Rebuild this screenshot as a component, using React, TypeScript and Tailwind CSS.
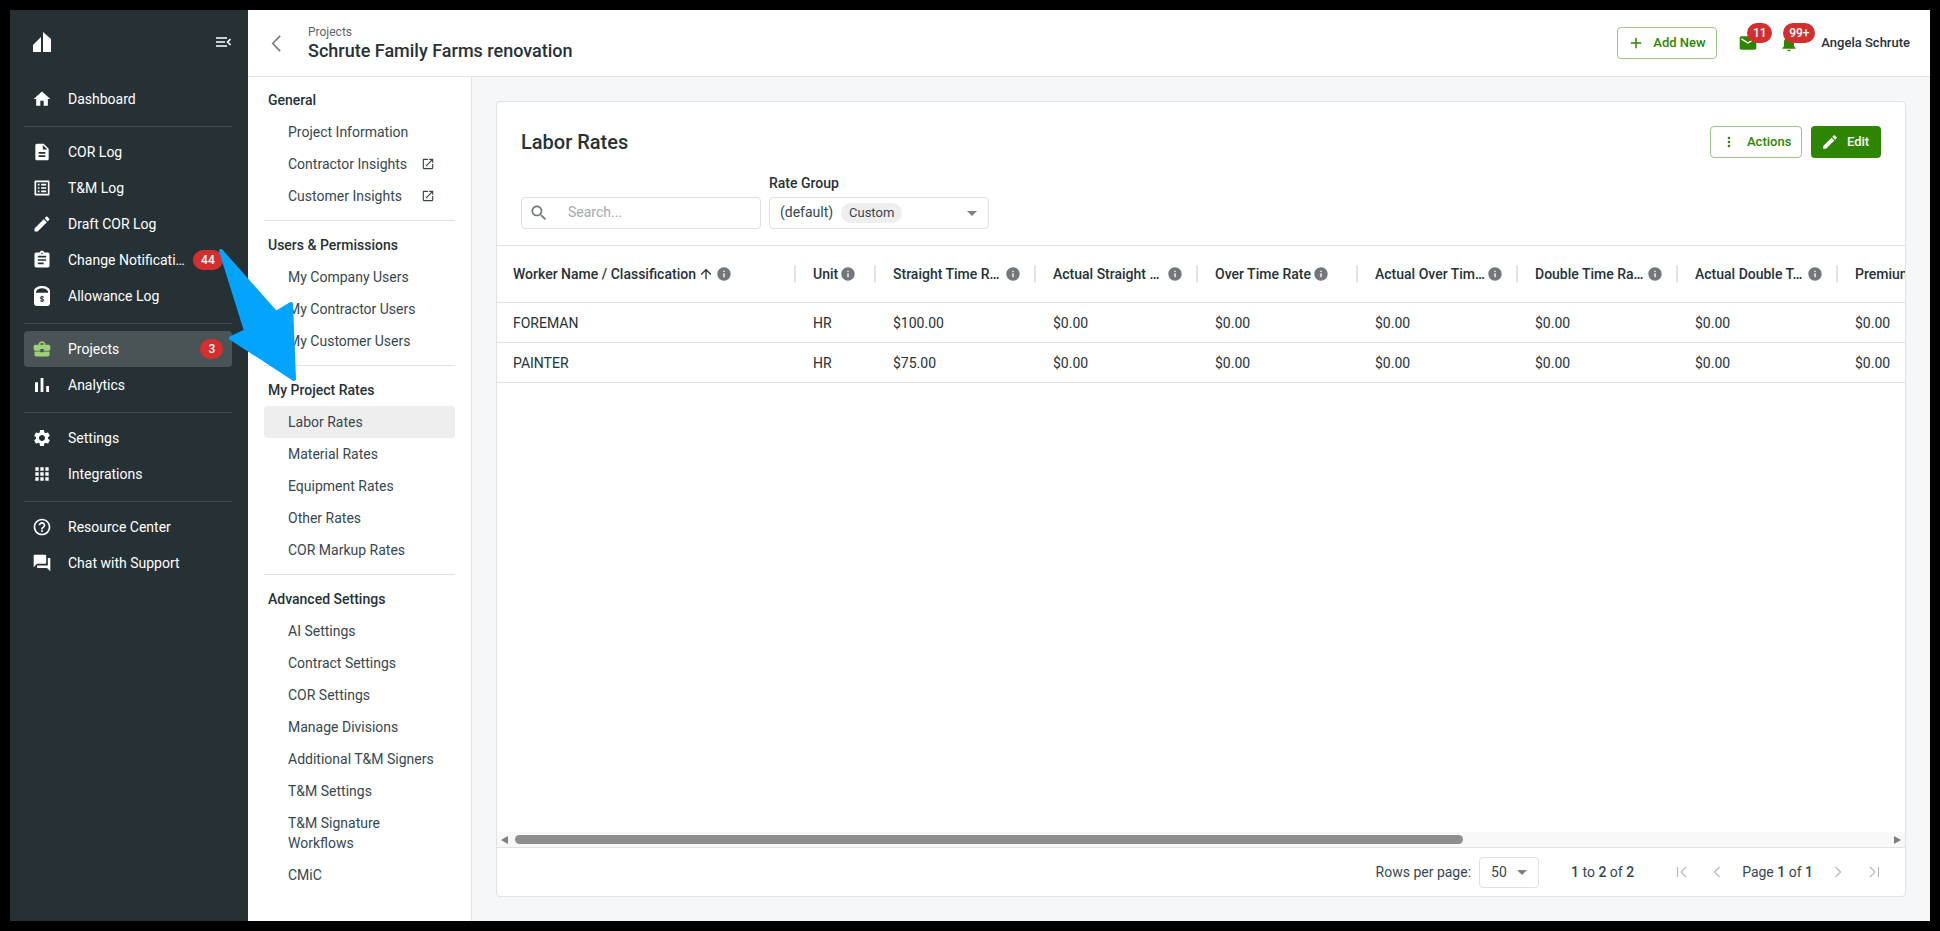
import React from "react";

const P = {
  home: "M10 20v-6h4v6h5v-8h3L12 3 2 12h3v8z",
  doc: "M14 2H6c-1.1 0-1.99.9-1.99 2L4 20c0 1.1.89 2 1.99 2H18c1.1 0 2-.9 2-2V8l-6-6zm2 16H8v-2h8v2zm0-4H8v-2h8v2zm-3-5V3.5L18.5 9H13z",
  list: "M19 5v14H5V5h14m1.1-2H3.9c-.5 0-.9.4-.9.9v16.2c0 .4.4.9.9.9h16.2c.4 0 .9-.5.9-.9V3.9c0-.5-.5-.9-.9-.9zM11 7h6v2h-6V7zm0 4h6v2h-6v-2zm0 4h6v2h-6zM7 7h2v2H7zm0 4h2v2H7zm0 4h2v2H7z",
  edit: "M3 17.25V21h3.75L17.81 9.94l-3.75-3.75L3 17.25zM20.71 7.04c.39-.39.39-1.02 0-1.41l-2.34-2.34c-.39-.39-1.02-.39-1.41 0l-1.83 1.83 3.75 3.75 1.83-1.83z",
  clip: "M19 3h-4.18C14.4 1.84 13.3 1 12 1c-1.3 0-2.4.84-2.82 2H5c-1.1 0-2 .9-2 2v14c0 1.1.9 2 2 2h14c1.1 0 2-.9 2-2V5c0-1.1-.9-2-2-2zm-7 0c.55 0 1 .45 1 1s-.45 1-1 1-1-.45-1-1 .45-1 1-1zm2 14H7v-2h7v2zm3-4H7v-2h10v2zm0-4H7V7h10v2z",
  work: "M10 16v-1H3.01L3 19c0 1.11.89 2 2 2h14c1.11 0 2-.89 2-2v-4h-7v1h-4zm10-9h-4.01V5l-2-2h-4l-2 2v2H4c-1.1 0-2 .9-2 2v3c0 1.11.89 2 2 2h6v-2h4v2h6c1.1 0 2-.9 2-2V9c0-1.1-.9-2-2-2zm-6 0h-4V5h4v2z",
  bars: "M5 9.2h3V19H5zM10.6 5h2.8v14h-2.8zm5.6 8H19v6h-2.8z",
  gear: "M19.14 12.94c.04-.3.06-.61.06-.94 0-.32-.02-.64-.07-.94l2.03-1.58c.18-.14.23-.41.12-.61l-1.92-3.32c-.12-.22-.37-.29-.59-.22l-2.39.96c-.5-.38-1.03-.7-1.62-.94l-.36-2.54c-.04-.24-.24-.41-.48-.41h-3.84c-.24 0-.43.17-.47.41l-.36 2.54c-.59.24-1.13.57-1.62.94l-2.39-.96c-.22-.08-.47 0-.59.22L2.74 8.87c-.12.21-.08.47.12.61l2.03 1.58c-.05.3-.09.63-.09.94s.02.64.07.94l-2.03 1.58c-.18.14-.23.41-.12.61l1.92 3.32c.12.22.37.29.59.22l2.39-.96c.5.38 1.03.7 1.62.94l.36 2.54c.05.24.24.41.48.41h3.84c.24 0 .44-.17.47-.41l.36-2.54c.59-.24 1.13-.56 1.62-.94l2.39.96c.22.08.47 0 .59-.22l1.92-3.32c.12-.22.07-.47-.12-.61l-2.01-1.58zM12 15.6c-1.98 0-3.6-1.62-3.6-3.6s1.62-3.6 3.6-3.6 3.6 1.62 3.6 3.6-1.62 3.6-3.6 3.6z",
  apps: "M4 8h4V4H4v4zm6 12h4v-4h-4v4zm-6 0h4v-4H4v4zm0-6h4v-4H4v4zm6 0h4v-4h-4v4zm6-10v4h4V4h-4zm-6 4h4V4h-4v4zm6 6h4v-4h-4v4zm0 6h4v-4h-4v4z",
  help: "M11 18h2v-2h-2v2zm1-16C6.48 2 2 6.48 2 12s4.48 10 10 10 10-4.48 10-10S17.52 2 12 2zm0 18c-4.41 0-8-3.59-8-8s3.59-8 8-8 8 3.59 8 8-3.59 8-8 8zm0-14c-2.21 0-4 1.79-4 4h2c0-1.1.9-2 2-2s2 .9 2 2c0 2-3 1.75-3 5h2c0-2.25 3-2.5 3-5 0-2.21-1.79-4-4-4z",
  forum: "M21 6h-2v9H6v2c0 .55.45 1 1 1h11l4 4V7c0-.55-.45-1-1-1zm-4 6V3c0-.55-.45-1-1-1H3c-.55 0-1 .45-1 1v14l4-4h10c.55 0 1-.45 1-1z",
  mail: "M20 4H4c-1.1 0-1.99.9-1.99 2L2 18c0 1.1.9 2 2 2h16c1.1 0 2-.9 2-2V6c0-1.1-.9-2-2-2zm0 4l-8 5-8-5V6l8 5 8-5v2z",
  bell: "M12 22c1.1 0 2-.9 2-2h-4c0 1.1.89 2 2 2zm6-6v-5c0-3.07-1.64-5.64-4.5-6.32V4c0-.83-.67-1.5-1.5-1.5s-1.5.67-1.5 1.5v.68C7.63 5.36 6 7.92 6 11v5l-2 2v1h16v-1l-2-2z",
  open: "M19 19H5V5h7V3H5c-1.11 0-2 .9-2 2v14c0 1.1.89 2 2 2h14c1.1 0 2-.9 2-2v-7h-2v7zM14 3v2h3.59l-9.83 9.83 1.41 1.41L19 6.41V10h2V3h-7z",
  search: "M15.5 14h-.79l-.28-.27C15.41 12.59 16 11.11 16 9.5 16 5.91 13.09 3 9.5 3S3 5.91 3 9.5 5.91 16 9.5 16c1.61 0 3.09-.59 4.23-1.57l.27.28v.79l5 4.99L20.49 19l-4.99-5zm-6 0C7.01 14 5 11.99 5 9.5S7.01 5 9.5 5 14 7.01 14 9.5 11.99 14 9.5 14z",
  more: "M12 8c1.1 0 2-.9 2-2s-.9-2-2-2-2 .9-2 2 .9 2 2 2zm0 2c-1.1 0-2 .9-2 2s.9 2 2 2 2-.9 2-2-.9-2-2-2zm0 6c-1.1 0-2 .9-2 2s.9 2 2 2 2-.9 2-2-.9-2-2-2z",
  add: "M19 13h-6v6h-2v-6H5v-2h6V5h2v6h6v2z",
  up: "M4 12l1.41 1.41L11 7.83V20h2V7.83l5.58 5.59L20 12l-8-8-8 8z",
  info: "M12 2C6.48 2 2 6.48 2 12s4.48 10 10 10 10-4.48 10-10S17.52 2 12 2zm1 15h-2v-6h2v6zm0-8h-2V7h2v2z",
};

function Ic({ d, className }: { d: string; className: string }) {
  return (
    <svg viewBox="0 0 24 24" fill="currentColor" className={className}>
      <path d={d} fillRule="evenodd" />
    </svg>
  );
}

function Caret() {
  return (
    <svg viewBox="0 0 10 5" className="h-[5px] w-[10px] fill-[#7b8185]">
      <path d="M0 0h10L5 5z" />
    </svg>
  );
}

function Canister() {
  return (
    <svg viewBox="0 0 16 20" className="mx-[2px] h-5 w-4 shrink-0">
      <path d="M0 5C0 2 4 0 8 0s8 2 8 5v12a3 3 0 0 1-3 3H3a3 3 0 0 1-3-3z" fill="#ffffff" />
      <path d="M2 5.500C2.500 3.500 5 2.200 8 2.200s5.500 1.300 6 3.300v1.300H2z" fill="#263135" />
      <path d="M10 11.500c-.5-1-3.500-1-4 .2 0 1.800 4 .8 4 2.600-.5 1.200-3.500 1.200-4 .2M8 9.800v6.400" fill="none" stroke="#263135" strokeWidth="1" />
    </svg>
  );
}

function NavRow({ d, label, badge, active, badgeCls, iconCls, node }: { d?: string; label: string; badge?: string; active?: boolean; badgeCls?: string; iconCls?: string; node?: React.ReactNode }) {
  return (
    <div className={"flex h-9 items-center rounded pl-2 text-sm text-white " + (active ? "bg-[#4a5356]" : "")}>
      {node ?? <Ic d={d as string} className={(iconCls ?? "h-5 w-5") + " shrink-0 " + (active ? "text-[#9fd179]" : "text-white")} />}
      <span className="ml-4 whitespace-nowrap">{label}</span>
      {badge && (
        <span className={"flex h-5 items-center justify-center rounded-full bg-[#d32f2f] text-xs font-medium text-white " + badgeCls}>
          {badge}
        </span>
      )}
    </div>
  );
}

function SideLine() {
  return <div className="mb-[7px] mt-[9px] h-px bg-[#424c50]" />;
}

function Sidebar() {
  return (
    <aside className="flex w-[238px] shrink-0 flex-col bg-[#263135] pl-[14px] pr-4">
      <div className="flex h-[71px] items-start justify-between pl-[9px] pr-[1px] pt-[22px]">
        <svg viewBox="0 0 18 20" className="h-5 w-[18px] fill-white">
          <path d="M0 13 8 5v15H0zM10 0l8 7v13h-8z" />
        </svg>
        <svg viewBox="0 0 15 10" className="mt-[5px] h-[10px] w-[15px] fill-none stroke-white" strokeWidth="1.6">
          <path d="M0 1h11M0 5h9M0 9h11M14.500 2 11.500 5l3 3" />
        </svg>
      </div>
      <NavRow d={P.home} label="Dashboard" />
      <SideLine />
      <NavRow d={P.doc} label="COR Log" />
      <NavRow d={P.list} label="T&M Log" />
      <NavRow d={P.edit} label="Draft COR Log" />
      <NavRow d={P.clip} label="Change Notificati…" badge="44" badgeCls="ml-2 w-[30px]" />
      <NavRow node={<Canister />} label="Allowance Log" />
      <SideLine />
      <NavRow d={P.work} label="Projects" badge="3" active badgeCls="ml-[81px] w-[23px]" />
      <NavRow d={P.bars} label="Analytics" iconCls="-mx-[2px] h-6 w-6" />
      <SideLine />
      <NavRow d={P.gear} label="Settings" />
      <NavRow d={P.apps} label="Integrations" />
      <SideLine />
      <NavRow d={P.help} label="Resource Center" />
      <NavRow d={P.forum} label="Chat with Support" />
    </aside>
  );
}

function Header() {
  return (
    <header className="flex h-[67px] shrink-0 items-center border-b border-[#e0e2e4] bg-white pl-[23px] pr-5">
      <svg viewBox="0 0 12 20" preserveAspectRatio="none" className="h-[17px] w-[10px] fill-none stroke-[#6f767a]" strokeWidth="1.8">
        <path d="M11 1 2 10l9 9" />
      </svg>
      <div className="ml-[27px] flex flex-col">
        <span className="text-xs leading-4 text-[#5e666b]">Projects</span>
        <span className="text-lg font-medium leading-[22px] text-[#263238]">Schrute Family Farms renovation</span>
      </div>
      <button className="ml-auto flex h-8 w-[100px] items-center rounded border border-[#9cc58a] pl-[9px] text-[13px] font-medium text-[#2e8600]">
        <Ic d={P.add} className="h-[18px] w-[18px]" />
        <span className="ml-2">Add New</span>
      </button>
      <div className="relative ml-[21px] h-5 w-5">
        <Ic d={P.mail} className="h-5 w-5 text-[#2e8600]" />
        <span className="absolute -right-[14px] -top-[10px] flex h-5 w-[25px] items-center justify-center rounded-full bg-[#d32f2f] text-xs font-medium text-white">11</span>
      </div>
      <div className="relative ml-[21px] h-5 w-5">
        <Ic d={P.bell} className="h-5 w-5 text-[#2e8600]" />
        <span className="absolute -right-[16px] -top-[10px] flex h-5 w-[32px] items-center justify-center rounded-full bg-[#d32f2f] text-xs font-medium text-white">99+</span>
      </div>
      <span className="ml-[22px] text-[13px] font-medium text-[#263238]">Angela Schrute</span>
    </header>
  );
}

function SubItem({ label, open, active }: { label: string; open?: boolean; active?: boolean }) {
  return (
    <div className={"flex h-8 items-center rounded pl-6 text-[14px] text-[#37474f] " + (active ? "bg-[#eeeeee]" : "")}>
      {label}
      {open && <Ic d={P.open} className="ml-auto mr-[20px] h-[14px] w-[14px] text-[#37474f]" />}
    </div>
  );
}

function SubHead({ label }: { label: string }) {
  return <div className="flex h-8 items-center pl-1 text-sm font-medium text-[#263238]">{label}</div>;
}

function SubLine() {
  return <div className="my-2 h-px bg-[#e0e2e4]" />;
}

function SubNav() {
  return (
    <nav className="w-[224px] shrink-0 border-r border-[#e0e2e4] bg-white px-4 pt-[7px]">
      <SubHead label="General" />
      <SubItem label="Project Information" />
      <SubItem label="Contractor Insights" open />
      <SubItem label="Customer Insights" open />
      <SubLine />
      <SubHead label="Users & Permissions" />
      <SubItem label="My Company Users" />
      <SubItem label="My Contractor Users" />
      <SubItem label="My Customer Users" />
      <SubLine />
      <SubHead label="My Project Rates" />
      <SubItem label="Labor Rates" active />
      <SubItem label="Material Rates" />
      <SubItem label="Equipment Rates" />
      <SubItem label="Other Rates" />
      <SubItem label="COR Markup Rates" />
      <SubLine />
      <SubHead label="Advanced Settings" />
      <SubItem label="AI Settings" />
      <SubItem label="Contract Settings" />
      <SubItem label="COR Settings" />
      <SubItem label="Manage Divisions" />
      <SubItem label="Additional T&M Signers" />
      <SubItem label="T&M Settings" />
      <div className="py-[6px] pl-6 text-[14px] leading-5 text-[#37474f]">
        T&M Signature
        <br />
        Workflows
      </div>
      <SubItem label="CMiC" />
    </nav>
  );
}

const cols = [
  { label: "Worker Name / Classification", w: "w-[300px]", box: "", sort: true, sep: true, info: "ml-[2px]" },
  { label: "Unit", w: "w-[80px]", box: "", sep: true, info: "ml-[2px]" },
  { label: "Straight Time R…", w: "w-[160px]", box: "w-[110px]", sep: true, info: "ml-[2px]" },
  { label: "Actual Straight …", w: "w-[162px]", box: "w-[112px]", sep: true, info: "ml-[2px]" },
  { label: "Over Time Rate", w: "w-[160px]", box: "", sep: true, info: "ml-[2px]" },
  { label: "Actual Over Tim…", w: "w-[160px]", box: "w-[110px]", sep: true, info: "ml-[2px]" },
  { label: "Double Time Ra…", w: "w-[160px]", box: "w-[110px]", sep: true, info: "ml-[2px]" },
  { label: "Actual Double T…", w: "w-[160px]", box: "w-[110px]", sep: true, info: "ml-[2px]" },
  { label: "Premium Time Rate", w: "w-[160px]", box: "", sep: false, info: "" },
];

const rows = [
  ["FOREMAN", "HR", "$100.00", "$0.00", "$0.00", "$0.00", "$0.00", "$0.00", "$0.00"],
  ["PAINTER", "HR", "$75.00", "$0.00", "$0.00", "$0.00", "$0.00", "$0.00", "$0.00"],
];

function Table() {
  return (
    <div className="min-h-0 flex-1 overflow-hidden">
      <div className="flex h-[57px] items-center border-b border-[#e0e2e4]">
        {cols.map((c) => (
          <div key={c.label} className={"relative flex shrink-0 items-center whitespace-nowrap pl-4 text-sm font-medium text-[#263238] " + c.w}>
            <span className={"shrink-0 " + c.box}>{c.label}</span>
            {c.sort && <Ic d={P.up} className="ml-[2px] h-4 w-4 shrink-0 text-[#263238]" />}
            {c.sep && <Ic d={P.info} className={"h-4 w-4 shrink-0 text-[#72777c] " + c.info} />}
            {c.sep && <span className="absolute right-[1px] top-1/2 h-[17px] w-[2px] -translate-y-1/2 bg-[#e0e2e4]" />}
          </div>
        ))}
      </div>
      {rows.map((r) => (
        <div key={r[0]} className="flex h-10 items-center border-b border-[#e0e2e4]">
          {r.map((v, i) => (
            <div key={i} className={"shrink-0 pl-4 text-sm text-[#263238] " + cols[i].w}>
              {v}
            </div>
          ))}
        </div>
      ))}
    </div>
  );
}

function Card() {
  return (
    <section className="flex min-h-0 flex-1 flex-col rounded border border-[#e0e2e4] bg-white">
      <div className="shrink-0 border-b border-[#e0e2e4] px-6 pb-4 pt-6">
        <div className="flex h-8 items-center">
          <h1 className="text-xl font-medium text-[#263238]">Labor Rates</h1>
          <button className="ml-auto flex h-8 w-[92px] items-center rounded border border-[#9cc58a] pl-[10px] text-[13px] font-medium text-[#2e8600]">
            <Ic d={P.more} className="h-4 w-4" />
            <span className="ml-[10px]">Actions</span>
          </button>
          <button className="ml-[9px] flex h-8 w-[70px] items-center rounded bg-[#2e8600] pl-[10px] text-[13px] font-medium text-white">
            <Ic d={P.edit} className="h-[18px] w-[18px]" />
            <span className="ml-2">Edit</span>
          </button>
        </div>
        <div className="mt-[17px] flex items-end">
          <div className="flex h-8 w-[240px] items-center rounded border border-[#dfe1e3] pl-[7px]">
            <Ic d={P.search} className="h-5 w-5 text-[#72777c]" />
            <span className="mb-[2px] ml-[19px] text-sm text-[#a5a9ac]">Search...</span>
          </div>
          <div className="ml-2 flex flex-col">
            <span className="mb-[6px] text-sm font-medium leading-4 text-[#263238]">Rate Group</span>
            <div className="flex h-8 w-[220px] items-center rounded border border-[#dfe1e3] pl-[10px] pr-[11px] text-sm text-[#37474f]">
              <span className="mb-[2px]">(default)</span>
              <span className="ml-2 flex h-5 w-[61px] items-center justify-center rounded-full bg-[#eeeeee] text-[13px]">Custom</span>
              <span className="ml-auto flex">
                <Caret />
              </span>
            </div>
          </div>
        </div>
      </div>
      <Table />
      <div className="flex h-[15px] shrink-0 items-center bg-[#f8f8f8] pl-1">
        <svg viewBox="0 0 7 8" className="h-2 w-[7px] fill-[#7f7f7f]">
          <path d="M7 0v8L0 4z" />
        </svg>
        <div className="ml-[7px] h-[9px] w-[948px] rounded-full bg-[#8e8e8e]" />
        <svg viewBox="0 0 7 8" className="ml-auto mr-[4px] h-2 w-[7px] fill-[#7f7f7f]">
          <path d="M0 0v8l7-4z" />
        </svg>
      </div>
      <footer className="flex h-[49px] shrink-0 items-center justify-end border-t border-[#e0e2e4] pr-[25px] text-sm text-[#37474f]">
        <span>Rows per page:</span>
        <div className="ml-2 flex h-[31px] w-[60px] items-center rounded border border-[#dfe1e3] pl-[11px] pr-[11px]">
          <span>50</span>
          <span className="ml-auto flex">
            <Caret />
          </span>
        </div>
        <span className="ml-[32px]">
          <b className="font-medium">1</b> to <b className="font-medium">2</b> of <b className="font-medium">2</b>
        </span>
        <svg viewBox="0 0 12 12" className="ml-[42px] h-3 w-3 fill-none stroke-[#b5b9bb]" strokeWidth="1.2">
          <path d="M1.500 1v10M10 1 5 6l5 5" />
        </svg>
        <svg viewBox="0 0 12 12" className="ml-[23px] h-3 w-3 fill-none stroke-[#b5b9bb]" strokeWidth="1.2">
          <path d="M8.500 1l-5 5 5 5" />
        </svg>
        <span className="ml-[19px]">
          Page <b className="font-medium">1</b> of <b className="font-medium">1</b>
        </span>
        <svg viewBox="0 0 12 12" className="ml-[19px] h-3 w-3 fill-none stroke-[#b5b9bb]" strokeWidth="1.2">
          <path d="M3.500 1l5 5-5 5" />
        </svg>
        <svg viewBox="0 0 12 12" className="ml-[24px] h-3 w-3 fill-none stroke-[#b5b9bb]" strokeWidth="1.2">
          <path d="M2 1l5 5-5 5M10.500 1v10" />
        </svg>
      </footer>
    </section>
  );
}

export default function App() {
  return (
    <div className="relative h-[931px] w-full overflow-hidden bg-black p-[10px] [font-family:Roboto,sans-serif]">
      <div className="flex h-full w-full">
        <Sidebar />
        <div className="flex min-w-0 flex-1 flex-col bg-[#f6f7f9]">
          <Header />
          <div className="flex min-h-0 flex-1">
            <SubNav />
            <main className="flex min-w-0 flex-1 flex-col p-6">
              <Card />
            </main>
          </div>
        </div>
      </div>
      <svg viewBox="0 0 1940 931" className="pointer-events-none absolute left-0 top-0 h-[931px] w-[1940px]">
        <path d="M221 251 276 313 291 304 294 379 231 338 246 331Z" fill="#03a4fb" stroke="#03a4fb" strokeWidth="4" strokeLinejoin="round" />
      </svg>
    </div>
  );
}
